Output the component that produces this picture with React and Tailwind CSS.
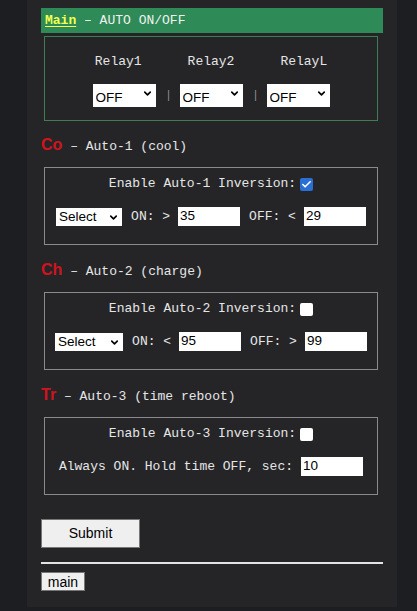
import { ChevronDown, Check } from 'lucide-react'

const mono = { fontFamily: '"Liberation Mono", "Courier New", monospace' }

function Select({ value, w = 'w-[63px]' }) {
  return (
    <div className={`relative ${w} h-[18px] bg-white shrink-0`}>
      <select
        defaultValue={value}
        className="appearance-none w-full h-full bg-white text-black text-[13.5px] leading-[18px] pl-[3px] outline-none"
        style={{ fontFamily: '"Liberation Sans", Arial, sans-serif' }}
      >
        <option>{value}</option>
      </select>
      <ChevronDown size={11} strokeWidth={3.5} className="absolute right-[3px] top-[4px] text-black pointer-events-none" />
    </div>
  )
}

function NumInput({ value }) {
  return (
    <input
      defaultValue={value}
      className="w-[62px] h-[19px] bg-white text-black text-[13.5px] pl-[2px] outline-none shrink-0"
      style={{ fontFamily: '"Liberation Sans", Arial, sans-serif' }}
    />
  )
}

function Box({ checked }) {
  return (
    <span className={`w-[13px] h-[13px] rounded-[2px] flex items-center justify-center shrink-0 ${checked ? 'bg-[#2a6fd4]' : 'bg-white'}`}>
      {checked && <Check size={11} strokeWidth={3.5} className="text-white" />}
    </span>
  )
}

function Heading({ tag, label, className }) {
  return (
    <div className={`h-[22px] leading-[22px] flex items-baseline ${className}`}>
      <span className="text-[16px] font-bold text-[#d0141f]" style={{ fontFamily: '"Liberation Sans", Arial, sans-serif' }}>{tag}</span>
      <span className="text-[13px] text-[#e6e6e6] whitespace-pre" style={mono}>{` – ${label}`}</span>
    </div>
  )
}

function AutoBox({ n, checked, children }) {
  return (
    <div className="ml-[3px] mr-[5px] border border-[#8a8a8a] pt-[8px] pb-[18px] flex flex-col items-center">
      <div className="h-[16px] flex items-center gap-[4px] text-[13px] text-[#e6e6e6]" style={mono}>
        <span>Enable Auto-{n} Inversion:</span>
        <Box checked={checked} />
      </div>
      <div className="mt-[15px] h-[19px] flex items-center text-[13px] text-[#e6e6e6]" style={mono}>
        {children}
      </div>
    </div>
  )
}

export default function App() {
  return (
    <div className="min-h-screen bg-[#1d1e21]">
      <div className="ml-[27px] w-[370px] bg-[#252528] px-[14px] pt-[8px] pb-[16px]">
        <div className="h-[25px] bg-[#2e8b57] pl-[4px] flex items-center text-[13px] text-[#f2f2f2]" style={mono}>
          <span className="font-bold text-[#f4ff4f] underline underline-offset-2">Main</span>
          <span className="whitespace-pre">{' – AUTO ON/OFF'}</span>
        </div>

        <div className="mt-[3px] ml-[3px] mr-[5px] border border-[#3e7d55] pt-[17px] pb-[18px] flex flex-col items-center">
          <div className="h-[16px] flex items-center gap-[46px] text-[13px] text-[#e6e6e6]" style={mono}>
            <span>Relay1</span>
            <span>Relay2</span>
            <span>RelayL</span>
          </div>
          <div className="mt-[14px] flex items-center gap-[10px]">
            <Select value="OFF" />
            <span className="w-[4px] text-center text-[11px] text-[#9a9a9a] leading-none">|</span>
            <Select value="OFF" />
            <span className="w-[4px] text-center text-[11px] text-[#9a9a9a] leading-none">|</span>
            <Select value="OFF" />
          </div>
        </div>

        <Heading tag="Co" label="Auto-1 (cool)" className="mt-[13px] mb-[11px]" />
        <AutoBox n={1} checked>
          <Select value="Select" w="w-[66px]" />
          <span className="ml-[9px] mr-[8px] whitespace-pre">{'ON: >'}</span>
          <NumInput value="35" />
          <span className="ml-[9px] mr-[8px] whitespace-pre">{'OFF: <'}</span>
          <NumInput value="29" />
        </AutoBox>

        <Heading tag="Ch" label="Auto-2 (charge)" className="mt-[14px] mb-[11px]" />
        <AutoBox n={2}>
          <Select value="Select" w="w-[68px]" />
          <span className="ml-[9px] mr-[8px] whitespace-pre">{'ON: <'}</span>
          <NumInput value="95" />
          <span className="ml-[9px] mr-[8px] whitespace-pre">{'OFF: >'}</span>
          <NumInput value="99" />
        </AutoBox>

        <Heading tag="Tr" label="Auto-3 (time reboot)" className="mt-[14px] mb-[11px]" />
        <AutoBox n={3}>
          <span className="mr-[8px]">Always ON. Hold time OFF, sec:</span>
          <NumInput value="10" />
        </AutoBox>

        <button
          className="mt-[24px] w-[99px] h-[29px] bg-[#efefef] border border-[#767676] text-black text-[14px] block"
          style={{ fontFamily: '"Liberation Sans", Arial, sans-serif' }}
        >
          Submit
        </button>
        <div className="mt-[14px] h-[2px] bg-[#e4e4e4]" />
        <button
          className="mt-[8px] w-[44px] h-[19px] bg-[#efefef] border border-[#767676] text-black text-[14px] leading-none block"
          style={{ fontFamily: '"Liberation Sans", Arial, sans-serif' }}
        >
          main
        </button>
      </div>
    </div>
  )
}
